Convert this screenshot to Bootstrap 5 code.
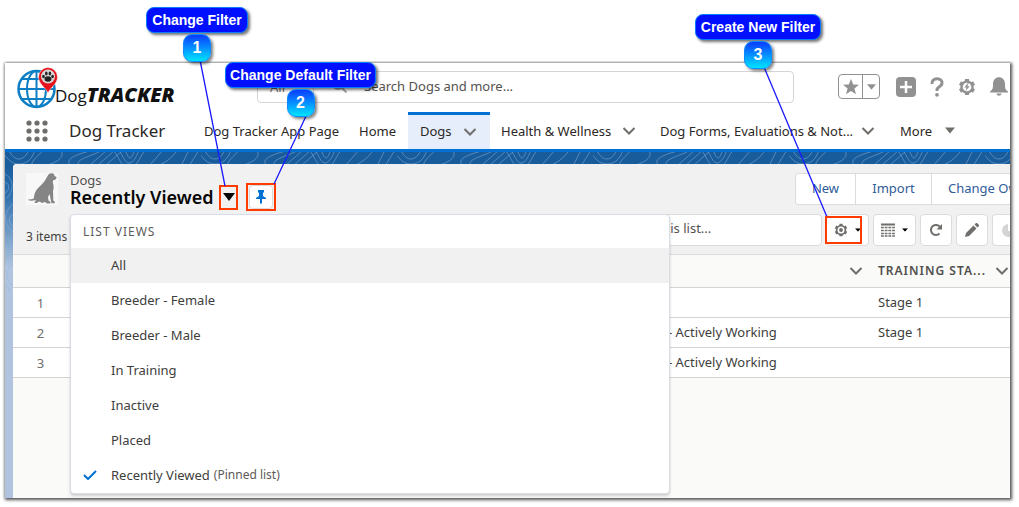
<!DOCTYPE html>
<html lang="en">
<head>
<meta charset="utf-8">
<meta name="viewport" content="width=device-width, initial-scale=1">
<title>Dogs | Recently Viewed</title>
<link href="https://cdn.jsdelivr.net/npm/bootstrap@5.3.0/dist/css/bootstrap.min.css" rel="stylesheet">
<style>
  body { font-family: "Noto Sans", sans-serif; font-size: 13px; line-height: 20px; color: #3e3e3c; background: #fff; }
  .stage { padding: 63px 9px 9px 5px; min-height: 100vh; }
  .app { background: #b0c4df; box-shadow: 1px 1px 3px 1px #555, 0 0 3px #ccc; clip-path: inset(-2px -8px -8px -3px); }
  .app svg, .marks svg { display: block; flex: none; }
  .topbar { height: 49px; padding: 0 0 2px 12px; }
  .logo-text { font-family: "Open Sans", sans-serif; color: #111; font-size: 17px; line-height: 24px; margin: 18px 0 0 -6px; white-space: nowrap; }
  .logo-text b { font-size: 20px; font-weight: 800; font-style: italic; }
  .brand { width: 240px; }
  .global-search { flex: 1; margin-right: 44px; height: 32px; border: 1px solid #d5d5d5; border-radius: 4px; overflow: hidden; background: #fff; }
  .global-search button { border: 0; background: none; color: #706e6b; width: 56px; height: 24px; padding: 0 0 0 12px; text-align: left; border-right: 1px solid #d5d5d5; }
  .global-search input, .list-search input { border: 0; outline: 0; background: none; min-width: 0; padding: 0 0 2px; color: #3e3e3c; }
  input::placeholder { color: #54524f; opacity: 1; }
  .tools { color: #919191; width: 172px; gap: 14px; }
  .tools button, .icon-plain { border: 0; padding: 0; background: none; color: inherit; }
  .fav { width: 42px; height: 25px; border: 1px solid #919191; border-radius: 4px; margin-right: 2px; }
  .fav button { height: 23px; }
  .fav button:first-child { width: 24px; padding-left: 3px; border-right: 1px solid #919191; }
  .fav button:last-child { width: 16px; padding-left: 4px; }
  .tabs { height: 37px; padding-left: 21px; }
  .app-name { font-size: 17px; color: #2b2826; width: 135px; margin-left: 21px; line-height: 24px; }
  .tabs a { color: #2b2826; text-decoration: none; white-space: nowrap; }
  .tab { display: flex; align-items: center; justify-content: space-between; height: 37px; padding: 0 13px 0 12px; flex: none; color: #706e6b; }
  .tab-app { width: 155px; } .tab-home { width: 49px; padding-right: 0; }
  .tab-on { width: 82px; background: #e5eefa; border-top: 3px solid #0070d2; }
  .tab-on a { margin-top: -3px; } .tab-on svg { margin-top: -1px; }
  .tab-health { width: 158px; padding: 0 12px 0 11px; } .tab-forms { width: 240px; }
  .tab-more { width: 80px; }
  .canvas-area { border-top: 3px solid #0070d2; padding: 12px 0 0 8px; background: linear-gradient(#195c9c 0, #195c9c 12px, #2a6dab 40px, #b0c4df 116px); }
  .topo { position: absolute; left: 0; top: 0; width: 100%; height: 100%; }
  .panel { background: #fafaf9; border-radius: 4px 0 0 0; overflow: hidden; }
  .panel-head { background: #f1f1f1; padding: 9px 0 9px 13px; height: 90px; }
  .avatar { width: 32px; height: 32px; background: #f8f8f8; margin-right: 12px; }
  .obj { line-height: 14px; color: #54524f; }
  .view-title { font-size: 18px; line-height: 20px; font-weight: 600; color: #080707; margin: 0; width: 149px; white-space: nowrap; }
  .red-box { border: 2px solid #ff3b00; background: none; padding: 0; display: flex; align-items: center; justify-content: center; }
  .box-caret { width: 19px; height: 25px; }
  .box-pin { width: 30px; height: 28px; margin-left: 8px; }
  .box-pin button { width: 24px; height: 24px; border: 1px solid #dddbda; border-radius: 4px; background: #fff; padding: 0; display: flex; align-items: center; justify-content: center; }
  .title-row { height: 38px; }
  .actions { width: 215px; height: 32px; overflow: hidden; border: 1px solid #dddbda; border-right: 0; border-radius: 4px 0 0 4px; background: #fff; }
  .actions button { border: 0; border-right: 1px solid #dddbda; background: #fff; color: #2f5c99; padding: 0 0 2px; flex: none; height: 30px; white-space: nowrap; }
  .actions button:nth-child(1) { width: 60px; } .actions button:nth-child(2) { width: 76px; } .actions button:nth-child(3) { width: 120px; text-align: left; padding-left: 16px; }
  .tool-row { margin-top: 3px; height: 32px; }
  .item-count { margin-top: 14px; font-size: 12px; }
  .list-search { width: 248px; height: 32px; background: #fff; border: 1px solid #dddbda; border-radius: 4px; padding-left: 38px; }
  .list-search input { height: 28px; width: 200px; }
  .ctl-group { gap: 4px; margin-left: 4px; }
  .ctl { height: 32px; border: 1px solid #dddbda; border-radius: 4px; background: #fff; color: #706e6b; padding: 0; display: flex; align-items: center; justify-content: center; flex: none; }
  .ctl-wide { width: 43px; gap: 7px; } .ctl-sq { width: 32px; }
  .ctl-end { width: 18px; border-radius: 4px 0 0 4px; border-right: 0; color: #d4d4d4; overflow: hidden; justify-content: flex-start; padding-left: 9px; }
  .records { width: 100%; table-layout: fixed; border-collapse: collapse; background: #fff; border-top: 1px solid #dddbda; }
  .records th { background: #fafaf9; height: 33px; font-weight: 600; letter-spacing: 1px; color: #514f4d; font-size: 12px; padding: 0 8px 0 11px; border-bottom: 1px solid #d5d4d2; white-space: nowrap; }
  .records td { height: 30px; padding: 0 8px 2px 11px; border-bottom: 1px solid #d5d4d2; white-space: nowrap; }
  .records td:first-child { color: #706e6b; padding: 0; text-align: center; }
  .col-n { width: 55px; } .col-status { width: 210px; } .col-stage { width: 143px; }
  .records th:nth-child(3) { padding-right: 4px; }
  .records th:last-child { padding-right: 1px; }
  .views-menu { position: absolute; left: 65px; top: 151px; width: 600px; border: 1px solid #d8dde6; border-radius: 4px; background: #fff; box-shadow: 0 2px 3px rgba(0,0,0,.18); z-index: 5; margin: 0; padding: 0; }
  .views-menu h2 { font-size: 12px; letter-spacing: 1px; line-height: 33px; color: #5c5a57; margin: 0; padding-left: 12px; font-weight: 400; }
  .views-menu a { display: flex; align-items: center; height: 35px; padding: 0 0 2px 12px; color: #3e3e3c; text-decoration: none; }
  .views-menu .tick { width: 28px; }
  .views-menu .hot { background: #f1f1f1; }
  .views-menu small { font-size: 12px; color: #5c5a57; margin-left: 4px; }
  .marks { position: absolute; top: 0; width: 400px; height: 250px; z-index: 9; pointer-events: none; font-family: "Liberation Sans", sans-serif; font-weight: 700; color: #fff; }
  .marks-l { left: 0; } .marks-r { right: 0; }
  .marks svg { position: absolute; left: 0; top: 0; }
  .tip { position: absolute; display: flex; flex-direction: column; align-items: center; }
  .tip span { background: #0010ff; border: 1px solid #0a7dff; border-radius: 8px; box-shadow: 2px 2px 3px rgba(0,0,0,.55); font-size: 14px; line-height: 24px; height: 26px; text-align: center; width: 100%; white-space: nowrap; }
  .tip i { font-style: normal; font-size: 16px; width: 28px; height: 28px; line-height: 26px; text-align: center; border-radius: 9px; border: 1px solid #0a8cff; background: linear-gradient(#0a3cff, #00e4ff); box-shadow: 2px 2px 3px rgba(0,0,0,.5); margin-top: 1px; }
  .tip-1 { left: 146px; top: 7px; width: 102px; } .tip-2 { left: 225px; top: 62px; width: 151px; } .tip-3 { left: 76px; top: 14px; width: 126px; }
</style>
</head>
<body>
<svg width="0" height="0" class="position-absolute" aria-hidden="true">
  <symbol id="chev" viewBox="0 0 14 10"><path d="M1.500 2l5.500 5.500L12.500 2" fill="none" stroke="#706e6b" stroke-width="2"/></symbol>
  <symbol id="caret" viewBox="0 0 10 6"><path d="M0 0h10L5 6z" fill="currentColor"/></symbol>
  <symbol id="cog" viewBox="0 0 20 20"><g fill="none" stroke="currentColor"><path d="M10 1v18M2.200 5.500l15.600 9M2.200 14.500l15.600-9" stroke-width="4.500"/></g><circle cx="10" cy="10" r="7.500" fill="currentColor"/></symbol>
</svg>
<div class="stage position-relative d-flex flex-column">
  <div class="app position-relative d-flex flex-column flex-grow-1">
    <header class="bg-white">
      <div class="topbar d-flex align-items-center">
        <div class="brand d-flex align-items-center">
          <svg width="44" height="44" viewBox="0 0 44 44" aria-hidden="true">
            <g fill="none" stroke="#0c7fc4" stroke-width="2"><circle cx="19.500" cy="24" r="18" stroke-width="2.500"/><ellipse cx="19.500" cy="24" rx="9.500" ry="18"/><path d="M19.500 6v36M2 24h35M5 14h29M5 34h29"/></g>
            <path d="M31 28c-2-5-9.500-9-9.500-16a9.500 9.500 0 0 1 19 0c0 7-7.500 11-9.500 16z" fill="#e8121c" stroke="#fff" stroke-width=".5"/>
            <circle cx="31" cy="11.500" r="7" fill="#d8d8d8"/>
            <g fill="#222"><ellipse cx="31" cy="14" rx="3.500" ry="2.800"/><ellipse cx="26.500" cy="11.500" rx="1.300" ry="1.800"/><ellipse cx="29.300" cy="8.500" rx="1.300" ry="1.900"/><ellipse cx="32.900" cy="8.500" rx="1.300" ry="1.900"/><ellipse cx="35.600" cy="11.500" rx="1.300" ry="1.800"/></g>
          </svg>
          <div class="logo-text">Dog<b>TRACKER</b></div>
        </div>
        <div class="global-search d-flex align-items-center">
          <button type="button">All</button>
          <svg class="ms-3" width="18" height="18" viewBox="0 0 18 18" fill="none" stroke="#a8a7a5" stroke-width="2"><circle cx="8" cy="6" r="5"/><path d="M11.500 9.500l5 5"/></svg>
          <input class="flex-grow-1 ms-3" type="text" aria-label="Search Dogs and more" placeholder="Search Dogs and more...">
        </div>
        <div class="tools d-flex align-items-center">
          <div class="fav d-flex">
            <button type="button" aria-label="Favorite"><svg width="18" height="18" viewBox="0 0 18 18" fill="currentColor"><path d="M9 1l2.200 5.500 5.800.3-4.600 3.600 1.600 5.900L9 13l-5 3.300 1.600-5.900L1 6.800l5.800-.3z"/></svg></button>
            <button type="button" aria-label="Favorites list"><svg width="9" height="6"><use href="#caret"/></svg></button>
          </div>
          <button type="button" aria-label="Add"><svg width="20" height="20" viewBox="0 0 20 20"><rect width="20" height="20" rx="4" fill="currentColor"/><path d="M10 4v12M4 10h12" stroke="#fff" stroke-width="2.500"/></svg></button>
          <button type="button" aria-label="Help"><svg width="14" height="20" viewBox="0 0 14 20"><path d="M2 7C1 0 13 0 12 6.500c-.3 3-5 3-5 6.500v1" fill="none" stroke="currentColor" stroke-width="3"/><circle cx="7" cy="17.800" r="1.900" fill="currentColor"/></svg></button>
          <button type="button" aria-label="Setup"><svg width="18" height="20" viewBox="0 0 20 20"><use href="#cog" width="20" height="20"/><circle cx="10" cy="10" r="4.800" fill="#fff"/><path d="M11 5.500L7 10.500h2.500L8.500 14.500l4.500-5.300h-2.700l1.700-3.700z" fill="currentColor"/></svg></button>
          <button type="button" aria-label="Notifications"><svg width="18" height="20" viewBox="0 0 18 20" fill="currentColor"><path d="M0 14.500C3 12.500 3 11 3 7c0-9 12-9 12 0 0 4 0 5.500 3 7.500v1H0zM6.500 16.500h5c-.5 3-4.500 3-5 0z"/></svg></button>
        </div>
      </div>
      <nav class="tabs d-flex align-items-center">
        <button class="icon-plain" type="button" aria-label="App launcher"><svg width="22" height="22" viewBox="0 0 22 22" fill="#706e6b"><circle cx="3" cy="3" r="2.600"/><circle cx="11" cy="3" r="2.600"/><circle cx="19" cy="3" r="2.600"/><circle cx="3" cy="11" r="2.600"/><circle cx="11" cy="11" r="2.600"/><circle cx="19" cy="11" r="2.600"/><circle cx="3" cy="19" r="2.600"/><circle cx="11" cy="19" r="2.600"/><circle cx="19" cy="19" r="2.600"/></svg></button>
        <div class="app-name">Dog Tracker</div>
        <div class="tab tab-app ps-0"><a href="#">Dog Tracker App Page</a></div>
        <div class="tab tab-home ps-0"><a href="#">Home</a></div>
        <div class="tab tab-on"><a href="#" aria-current="page">Dogs</a><svg width="14" height="10"><use href="#chev"/></svg></div>
        <div class="tab tab-health"><a href="#">Health &amp; Wellness</a><svg width="14" height="10"><use href="#chev"/></svg></div>
        <div class="tab tab-forms"><a href="#">Dog Forms, Evaluations &amp; Not...</a><svg width="14" height="10"><use href="#chev"/></svg></div>
        <div class="tab tab-more"><a href="#">More</a><svg width="10" height="7"><use href="#caret"/></svg></div>
      </nav>
    </header>
    <main class="canvas-area position-relative flex-grow-1 d-flex">
      <svg class="topo" aria-hidden="true">
        <defs><pattern id="contours" width="196" height="150" patternUnits="userSpaceOnUse"><g fill="none" stroke="#8fb4d8" stroke-opacity=".5">
          <path d="M-4 0c6 4 8 12 18 12S28 4 30-2M4-1c3 5 6 8 10 8s8-4 9-8M38-2c-4 6-10 8-12 16M56-2c4 8-4 12-16 16M66 14c-8-8 8-12 22-16M74 14c-4-6 6-8 20-14M84 14l18-16M92 14l18-16M100 14l18-16M108-2c6 6 8 18 16 18s10-10 16-18M114-2c4 6 6 13 10 13s8-7 10-13M120-2c2 4 3 8 5 8s3-4 5-8M144 14l14-16M152 14c6-2 16-8 20-16M176 14l8-16M184 14l10-16"/>
          <path d="M0 22c8 4 10 16 2 24M0 30c5 2 5 8 0 11M8 52c-10 8-10 20 0 28M8 62c-5 4-5 8 0 12M-2 84c10 4 12 18 0 24M-2 92c6 2 6 8 0 10M8 112c-8 6-8 16 0 22M-2 132c6 2 8 8 8 18"/>
        </g></pattern></defs>
        <rect width="100%" height="140" fill="url(#contours)"/>
      </svg>
      <section class="panel position-relative flex-grow-1">
        <div class="panel-head">
          <div class="title-row d-flex">
            <svg class="avatar" viewBox="0 0 32 32" aria-hidden="true"><path d="M22.500 1.500C24 0 27 0 28 1l.5 2 2 1c0 2-1 3-3.500 3.200l-.2 2.300c1 3 1.200 5.500.2 8.500l.3 9.500 1.700 1.500-.5 1.200h-3l-.6-2.200-1.200-7-1.700 3 .5 3.500 2 1.500v1.500h-3.500l-2-1.500-3 1-2.500-1.500-3 1.500H8.500l.5-1.500 1-1.500c-2.500.5-5 1-7.500.3v-1c2 .3 4 0 5.500-1 0-6 3-9.500 7-13 3-3 4.500-5.500 5.500-7.500z" fill="#858585"/></svg>
            <div>
              <div class="obj">Dogs</div>
              <h1 class="view-title">Recently Viewed</h1>
            </div>
            <div class="d-flex align-items-center align-self-end">
              <button class="red-box box-caret" type="button" aria-label="Select a list view"><svg width="12" height="8" viewBox="0 0 12 8"><path d="M0 0h12L6 8z" fill="#080707"/></svg></button>
              <div class="red-box box-pin"><button type="button" aria-label="Pinned list"><svg width="10" height="14" viewBox="0 0 10 14"><path d="M2 0h6v2L7 3v3l3 2v1H6v4l-1 1-1-1V9H0V8l3-2V3L2 2z" fill="#0070d2"/></svg></button></div>
            </div>
            <div class="actions d-flex ms-auto"><button type="button">New</button><button type="button">Import</button><button type="button">Change Owner</button></div>
          </div>
          <div class="tool-row d-flex align-items-center">
            <span class="item-count me-auto">3 items</span>
            <label class="list-search d-flex"><input type="text" aria-label="Search this list" placeholder="Search this list..."></label>
            <div class="ctl-group d-flex">
              <button class="ctl ctl-wide" type="button" aria-label="List view controls"><svg width="14" height="14" viewBox="0 0 20 20"><use href="#cog" width="20" height="20"/><circle cx="10" cy="10" r="5" fill="#fff"/><circle cx="10" cy="10" r="2.800" fill="currentColor"/></svg><svg class="text-black" width="6" height="4" viewBox="0 0 10 6"><use href="#caret"/></svg></button>
              <button class="ctl ctl-wide" type="button" aria-label="Display as"><svg width="14" height="14" viewBox="0 0 14 14" fill="none" stroke="currentColor"><path d="M0 1.500h14" stroke-width="2"/><path d="M0 4.500h14M0 7.500h14M0 10.500h14M0 13h14" stroke-width="1.500" stroke-dasharray="2.800 .9"/></svg><svg class="text-black" width="6" height="4" viewBox="0 0 10 6"><use href="#caret"/></svg></button>
              <button class="ctl ctl-sq" type="button" aria-label="Refresh"><svg width="14" height="14" viewBox="0 0 14 14"><path d="M10.500 10.500a5 5 0 1 1 .5-6.500" fill="none" stroke="currentColor" stroke-width="2"/><path d="M13 1v5.500H7.500z" fill="currentColor"/></svg></button>
              <button class="ctl ctl-sq" type="button" aria-label="Edit"><svg width="14" height="14" viewBox="0 0 14 14" fill="currentColor"><path d="M0 14l1-4 7.500-7.500 3 3L4 13zM9.500 1.500L11 0h1l2 2v1l-1.500 1.500z"/></svg></button>
              <button class="ctl ctl-end" type="button" aria-label="Charts"><svg width="14" height="14" viewBox="0 0 14 14" fill="currentColor"><path d="M6 1v7h7A6.500 6.500 0 1 1 6 1zM8 0c3 0 6 3 6 6H8z"/></svg></button>
            </div>
          </div>
        </div>
        <table class="records">
          <colgroup><col class="col-n"><col><col class="col-status"><col class="col-stage"></colgroup>
          <thead><tr><th></th><th></th><th><svg class="ms-auto" width="14" height="10"><use href="#chev"/></svg></th><th><span class="d-flex align-items-center justify-content-between">TRAINING STA...<svg width="14" height="10"><use href="#chev"/></svg></span></th></tr></thead>
          <tbody>
            <tr><td>1</td><td></td><td></td><td>Stage 1</td></tr>
            <tr><td>2</td><td></td><td>- Actively Working</td><td>Stage 1</td></tr>
            <tr><td>3</td><td></td><td>- Actively Working</td><td></td></tr>
          </tbody>
        </table>
      </section>
    </main>
    <div class="views-menu">
      <h2>LIST VIEWS</h2>
      <a class="hot" href="#"><span class="tick"></span>All</a>
      <a href="#"><span class="tick"></span>Breeder - Female</a>
      <a href="#"><span class="tick"></span>Breeder - Male</a>
      <a href="#"><span class="tick"></span>In Training</a>
      <a href="#"><span class="tick"></span>Inactive</a>
      <a href="#"><span class="tick"></span>Placed</a>
      <a href="#"><span class="tick"><svg width="14" height="10" viewBox="0 0 14 10"><path d="M1 5l4 4 8-8" fill="none" stroke="#0070d2" stroke-width="2"/></svg></span>Recently Viewed <small>(Pinned list)</small></a>
    </div>
  </div>
  <div class="marks marks-l">
    <svg width="400" height="230" stroke="#1a1aff" stroke-width="1.300"><path d="M200 60l25 126M307 114l-33 70"/></svg>
    <div class="tip tip-1"><span>Change Filter</span><i>1</i></div>
    <div class="tip tip-2"><span>Change Default Filter</span><i>2</i></div>
  </div>
  <div class="marks marks-r">
    <svg width="400" height="250" fill="none" stroke="#1a1aff" stroke-width="1.300"><path d="M145 67l63 150"/><rect x="207" y="217" width="35" height="26" stroke="#ff3b00" stroke-width="2"/></svg>
    <div class="tip tip-3"><span>Create New Filter</span><i>3</i></div>
  </div>
</div>
<script src="https://cdn.jsdelivr.net/npm/bootstrap@5.3.0/dist/js/bootstrap.bundle.min.js"></script>
</body>
</html>
